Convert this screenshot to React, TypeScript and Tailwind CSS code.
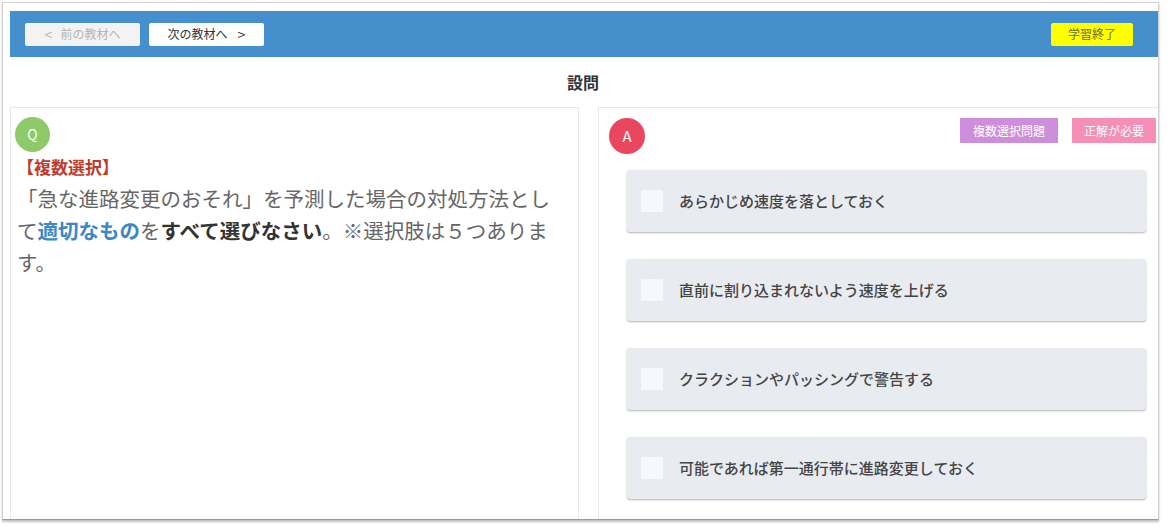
import React from 'react';

const options = [
    'あらかじめ速度を落としておく',
    '直前に割り込まれないよう速度を上げる',
    'クラクションやパッシングで警告する',
    '可能であれば第一通行帯に進路変更しておく',
];

const App: React.FC = () => {
    return (
        <div
            className="w-[1170px] h-[527px] bg-white pt-[2px] pl-[2px] overflow-hidden"
            style={{fontFamily: '"Noto Sans CJK JP", "Noto Sans", sans-serif'}}
        >
            {/* ウィンドウ枠 */}
            <div className="w-[1157px] h-[518px] border border-[#cfcfcf] border-b-[#9a9a9a] shadow-[0_2px_2px_rgba(0,0,0,0.25)] pl-[7px] pt-[8px] flex flex-col overflow-hidden">
                {/* ヘッダー */}
                <div className="h-[46px] bg-[#448fcc] flex items-center pl-[15px] pr-[25px] gap-[9px] shrink-0">
                    <button className="w-[115px] h-[23px] bg-[#f3f3f3] rounded-[2px] text-[12px] text-[#b4b4b4] flex items-center justify-center gap-[8px]">
                        <span className="text-[14px] leading-none">&lt;</span>
                        <span>前の教材へ</span>
                    </button>
                    <button className="w-[115px] h-[23px] bg-white rounded-[2px] text-[12px] text-[#333] flex items-center justify-center gap-[10px]">
                        <span>次の教材へ</span>
                        <span className="text-[14px] leading-none">&gt;</span>
                    </button>
                    <div className="flex-1" />
                    <button className="w-[82px] h-[23px] bg-[#ffff00] rounded-[2px] text-[12px] text-[#6b6b2a]">
                        学習終了
                    </button>
                </div>

                {/* タイトル */}
                <div className="h-[50px] flex items-center justify-center shrink-0">
                    <h1 className="text-[16px] font-bold text-[#333] pr-[2px]">設問</h1>
                </div>

                <div className="flex flex-1 gap-[19px] min-h-0">
                    {/* 問題 */}
                    <div className="w-[569px] border border-[#e8e8e8] border-b-0 pl-[4px] pt-[9px] shrink-0">
                        <div className="w-[35px] h-[35px] rounded-full bg-[#8ec96a] text-white text-[14px] flex items-center justify-center">
                            Q
                        </div>
                        <div className="pl-[2px] w-[548px] text-[20.5px] leading-[32px] text-[#666] -mt-[1px]">
                            <div className="text-[#c0392b] font-bold text-[17px]">【複数選択】</div>
                            <p className="-mt-[1px]">
                                「急な進路変更のおそれ」を予測した場合の対処方法として
                                <span className="text-[#3b88c3] font-bold">適切なもの</span>
                                を
                                <span className="text-[#333] font-bold">すべて選びなさい</span>
                                。※選択肢は５つあります。
                            </p>
                        </div>
                    </div>

                    {/* 回答 */}
                    <div className="flex-1 border border-[#e8e8e8] border-r-0 border-b-0 pt-[10px] pl-[10px] pr-[2px]">
                        <div className="flex items-start justify-between">
                            <div className="w-[36px] h-[36px] rounded-full bg-[#e9475f] text-white text-[15px] flex items-center justify-center">
                                A
                            </div>
                            <div className="flex gap-[14px]">
                                <span className="w-[98px] h-[25px] bg-[#cd8fdb] text-white text-[12px] flex items-center justify-center">
                                    複数選択問題
                                </span>
                                <span className="w-[84px] h-[25px] bg-[#f48fb6] text-white text-[12px] flex items-center justify-center">
                                    正解が必要
                                </span>
                            </div>
                        </div>
                        <div className="pl-[18px] pr-[10px] mt-[16px] flex flex-col gap-[27px]">
                            {options.map((opt) => (
                                <label
                                    key={opt}
                                    className="h-[62px] bg-[#e8ebf0] rounded-[3px] shadow-[0_1px_2px_rgba(0,0,0,0.3)] flex items-center pl-[14px] gap-[16px]"
                                >
                                    <span className="w-[22px] h-[22px] bg-[#f5f8fc] shrink-0" />
                                    <span className="text-[15px] text-[#444] font-medium">{opt}</span>
                                </label>
                            ))}
                        </div>
                    </div>
                </div>
            </div>
        </div>
    );
};

export default App;
